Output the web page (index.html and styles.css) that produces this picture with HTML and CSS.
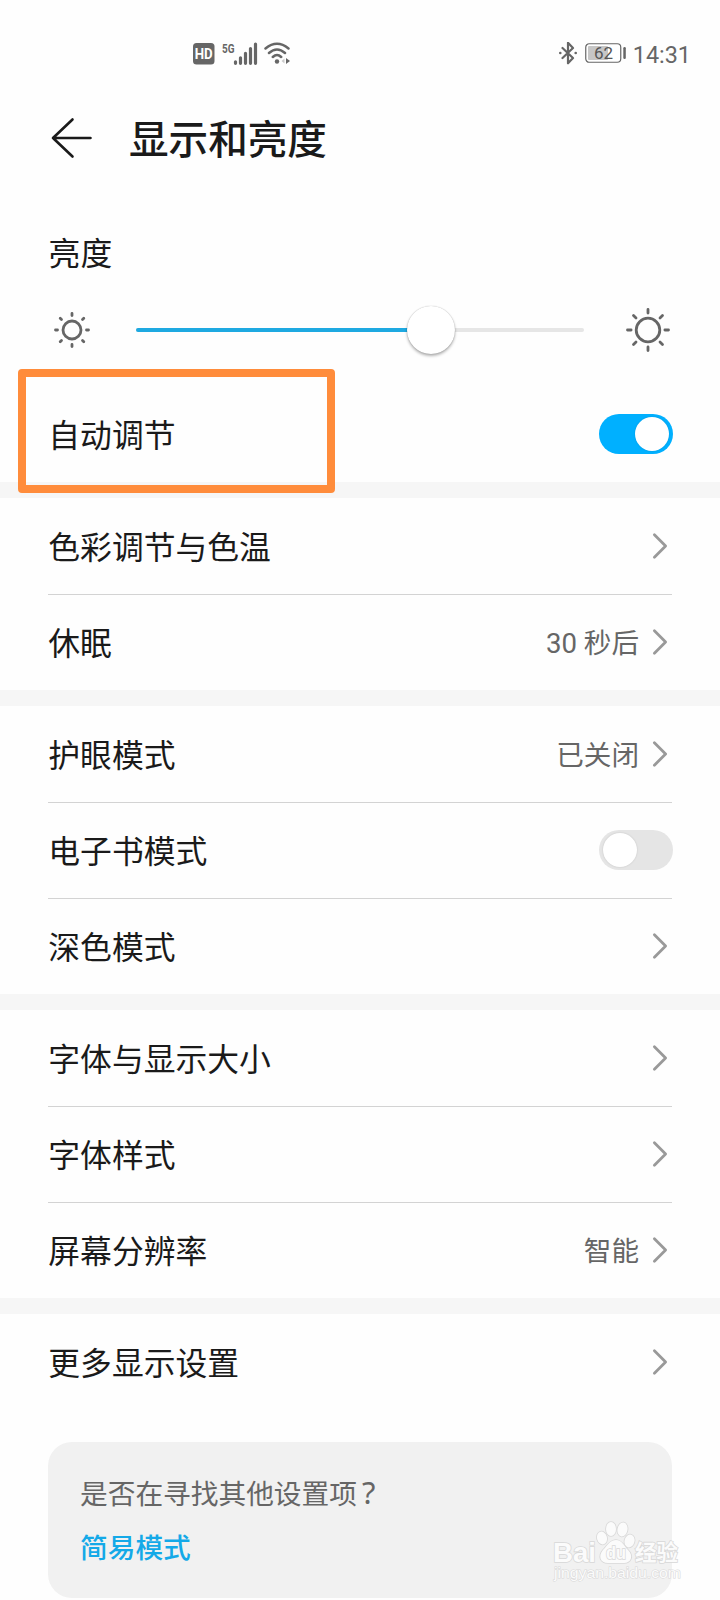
FILE: index.html
```html
<!DOCTYPE html>
<html lang="zh-CN">
<head>
<meta charset="utf-8">
<title>显示和亮度</title>
<link rel="stylesheet" href="styles.css">
</head>
<body>
<svg width="0" height="0" class="defs">
  <symbol id="chevron" viewBox="0 0 16 28"><path d="M2.400 2.800 13.600 14 2.400 25.200" fill="none" stroke="#999" stroke-width="2.800" stroke-linecap="round" stroke-linejoin="round"/></symbol>
</svg>
<div class="screen">
  <div class="status">
    <div class="status-left">
      <svg width="22" height="22" viewBox="0 0 22 22"><rect x="0" y="0" width="21.500" height="21.500" rx="3.500" fill="#666"/><text x="10.700" y="16" class="hd" text-anchor="middle" textLength="18" lengthAdjust="spacingAndGlyphs">HD</text></svg>
      <svg class="signal" width="36" height="24" viewBox="0 0 36 24">
        <text x="0" y="10.500" class="fiveg" textLength="12.500" lengthAdjust="spacingAndGlyphs">5G</text>
        <g stroke="#666" stroke-width="3.200" stroke-linecap="round"><path d="M13.500 21.300v-1.500M18.500 21.300v-5.500M23.500 21.300v-10M28.500 21.300V6.500M33.500 21.300V2"/></g>
      </svg>
      <svg class="wifi" width="28" height="24" viewBox="0 0 28 24">
        <g fill="none" stroke="#666" stroke-width="2.500" stroke-linecap="round"><path d="M1.500 6.500Q13 -3 24.500 6.500M5 11Q13 4 21 11M8.800 15Q13 11 17.200 15"/></g>
        <circle cx="13" cy="19.500" r="2.200" fill="#666"/><path d="M20.500 16.500 17.500 19l3 2.500z" fill="#ccc"/><path d="M22 16 26 19l-4 3z" fill="#666"/>
      </svg>
    </div>
    <div class="status-right">
      <svg width="20" height="24" viewBox="0 0 20 24"><path d="M4.500 6 15 16 10 21.300V.8L15 6 4.500 16" fill="none" stroke="#666" stroke-width="2.200" stroke-linejoin="round" stroke-linecap="round"/><circle cx="2.300" cy="11" r="1.300" fill="#666"/><circle cx="17.700" cy="11" r="1.300" fill="#666"/></svg>
      <svg class="battery" width="42" height="20" viewBox="0 0 42 20"><rect x=".75" y=".75" width="35" height="18.500" rx="3.500" fill="#fff" stroke="#666" stroke-width="1.200"/><rect x="3" y="3" width="20" height="14" rx="1" fill="#c6c6c6"/><rect x="38.300" y="4" width="2.500" height="12" rx="1.200" fill="#666"/><text x="18.500" y="16" text-anchor="middle" class="level">62</text></svg>
      <span class="clock">14:31</span>
    </div>
  </div>
  <header class="header">
    <svg width="44" height="44" viewBox="0 0 44 44"><path d="M23.500 3.500 4 22 23.500 40.500M4 22H41.500" fill="none" stroke="#1a1a1a" stroke-width="2.600" stroke-linecap="round" stroke-linejoin="round"/></svg>
    <h1>显示和亮度</h1>
  </header>
  <div class="label">亮度</div>
  <div class="brightness">
    <svg width="48" height="48" viewBox="-24 -24 48 48"><g fill="none" stroke="#666" stroke-width="2.800" stroke-linecap="round"><circle r="9"/><path d="M0-16.500v2M0 16.500v-2M-16.500 0h2M16.500 0h-2M-11.800-11.800l1.300 1.300M11.800-11.800l-1.300 1.300M-11.800 11.800l1.300-1.300M11.800 11.800l-1.300-1.300"/></g></svg>
    <div class="track"><div class="fill"><div class="thumb"></div></div></div>
    <svg width="48" height="48" viewBox="-24 -24 48 48"><g fill="none" stroke="#666" stroke-width="2.800" stroke-linecap="round"><circle r="11.800"/><path d="M0-20.500v3.600M0 20.500v-3.600M-20.500 0h3.600M20.500 0h-3.600M-14.500-14.500l2.500 2.500M14.500-14.500l-2.500 2.500M-14.500 14.500l2.500-2.500M14.500 14.500l-2.500-2.500"/></g></svg>
  </div>
  <div class="group">
    <div class="row auto"><span>自动调节</span><div class="toggle on"><i></i></div><div class="highlight"></div></div>
  </div>
  <div class="group">
    <div class="row"><span>色彩调节与色温</span><svg class="chev"><use href="#chevron"/></svg></div>
    <div class="row"><span>休眠</span><em>30 秒后</em><svg class="chev"><use href="#chevron"/></svg></div>
  </div>
  <div class="group">
    <div class="row"><span>护眼模式</span><em>已关闭</em><svg class="chev"><use href="#chevron"/></svg></div>
    <div class="row"><span>电子书模式</span><div class="toggle"><i></i></div></div>
    <div class="row"><span>深色模式</span><svg class="chev"><use href="#chevron"/></svg></div>
  </div>
  <div class="group">
    <div class="row"><span>字体与显示大小</span><svg class="chev"><use href="#chevron"/></svg></div>
    <div class="row"><span>字体样式</span><svg class="chev"><use href="#chevron"/></svg></div>
    <div class="row"><span>屏幕分辨率</span><em>智能</em><svg class="chev"><use href="#chevron"/></svg></div>
  </div>
  <div class="group last">
    <div class="row"><span>更多显示设置</span><svg class="chev"><use href="#chevron"/></svg></div>
  </div>
  <div class="card">
    <div class="question">是否在寻找其他设置项<span class="mark">?</span></div>
    <div class="link">简易模式</div>
  </div>
  <svg class="watermark" width="140" height="70" viewBox="0 0 140 70">
    <g fill="#fbfbfb" stroke="#d8d8d8" stroke-width="1.600" paint-order="stroke">
      <text x="1" y="41.500" class="brand" textLength="43" lengthAdjust="spacingAndGlyphs">Bai</text>
      <ellipse cx="50" cy="18" rx="5" ry="6.500" transform="rotate(-15 50 18)"/><ellipse cx="59" cy="9" rx="5" ry="7"/><ellipse cx="70.500" cy="9.500" rx="5" ry="7" transform="rotate(10 70.500 9.500)"/><ellipse cx="77.500" cy="21" rx="5" ry="6.500" transform="rotate(15 77.500 21)"/>
      <path d="M64 20c6 0 8 6 12 10 6 6 3 13-4 13-4 0-12 0-16 0-8 0-10-7-5-13 4-4 7-10 13-10z"/>
      <text x="54" y="39" class="du" textLength="20" lengthAdjust="spacingAndGlyphs">du</text>
      <text x="83" y="40" class="exp" textLength="43" lengthAdjust="spacingAndGlyphs">经验</text>
      <text x="2" y="57.500" class="url" textLength="127" lengthAdjust="spacingAndGlyphs">jingyan.baidu.com</text>
    </g>
  </svg>
</div>
</body>
</html>
```

FILE: styles.css
```css
* { box-sizing: border-box; }
body { margin: 0; background: #fefefe; }
svg { display: block; flex: none; }
.defs { position: absolute; }
.screen {
  position: relative;
  width: 720px;
  height: 1600px;
  overflow: hidden;
  color: #1a1a1a;
  font-family: Roboto, "Noto Sans CJK SC", sans-serif;
}
.status {
  display: flex;
  justify-content: space-between;
  height: 100px;
  padding: 42px 29px 0 193px;
}
.status-left, .status-right { display: flex; height: 24px; align-items: center; }
.signal { margin-left: 7px; overflow: visible; }
.wifi { margin-left: 6px; }
.hd { font: 700 14px Roboto, sans-serif; fill: #fff; }
.fiveg { font: 700 13px Roboto, sans-serif; fill: #666; }
.level { font: 400 17px Roboto, sans-serif; fill: #555; }
.battery { margin: 0 6px 2px 7px; }
.clock { font-size: 23.4px; line-height: 24px; color: #666; padding-top: 2px; }
.header { display: flex; align-items: center; height: 76px; padding-left: 49px; gap: 36px; }
h1 { margin: 6px 0 0; font-size: 39.6px; line-height: 56px; font-weight: 500; }
.label { height: 110px; padding: 55px 48px 0 48.600px; font-size: 31.8px; line-height: 46px; }
.brightness { display: flex; align-items: center; height: 88px; margin-bottom: 12px; padding: 0 48px; }
.track { flex: 1; height: 4px; margin: 0 40px; border-radius: 2px; background: #e6e6e6; }
.fill { position: relative; width: 295px; height: 4px; border-radius: 2px; background: #1ea9e1; }
.thumb {
  position: absolute;
  right: -24px;
  top: -22.5px;
  width: 48px;
  height: 48px;
  border-radius: 50%;
  background: #fff;
  box-shadow: 0 0 1px rgba(0,0,0,.3), 0 2px 3px rgba(0,0,0,.3);
}
.group { padding: 0 48px; border-bottom: 16px solid #f6f6f6; }
.group.last { border-bottom: 0; }
.row { display: flex; align-items: center; height: 96px; font-size: 31.8px; }
.row + .row { border-top: 1px solid #d3d3d3; padding-bottom: 1px; }
.row > span { flex: 1; line-height: 46px; padding: 3px 0 0 .3px; }
.row em { font-style: normal; font-size: 27.6px; line-height: 40px; color: #666; margin-right: 13px; padding-top: 3px; }
.chev { width: 16px; height: 28px; margin-right: 4px; }
.toggle { width: 74px; height: 40px; margin-right: -1px; padding: 3px 4px; border-radius: 20px; background: #e5e5e5; }
.toggle i { display: block; width: 34px; height: 34px; border-radius: 50%; background: #fff; box-shadow: 0 0 2px rgba(0,0,0,.15); }
.toggle.on { display: flex; justify-content: flex-end; background: #00b0ff; }
.auto { position: relative; }
.highlight {
  position: absolute;
  left: -30px;
  top: -17px;
  width: 317px;
  height: 124px;
  border: 8px solid #ff8c3b;
  border-radius: 4px;
}
.card {
  height: 156px;
  margin: 32px 48px 0;
  padding: 32px 32px 0;
  border-radius: 24px;
  background: #f1f1f1;
  font-size: 27.7px;
}
.question { color: #666; line-height: 42px; }
.mark { margin-left: 5px; font-family: "Noto Sans", sans-serif; font-size: 31px; line-height: 20px; }
.link { color: #14a9e8; font-weight: 500; line-height: 42px; margin-top: 12px; }
.watermark { position: absolute; left: 552px; top: 1520px; }
.brand { font: 700 28px "Liberation Sans", sans-serif; }
.du { font: 700 19px "Liberation Sans", sans-serif; }
.exp { font: 700 22px "Noto Sans CJK SC", sans-serif; }
.url { font: 400 14px "Liberation Sans", sans-serif; stroke-width: 1px; }
```
